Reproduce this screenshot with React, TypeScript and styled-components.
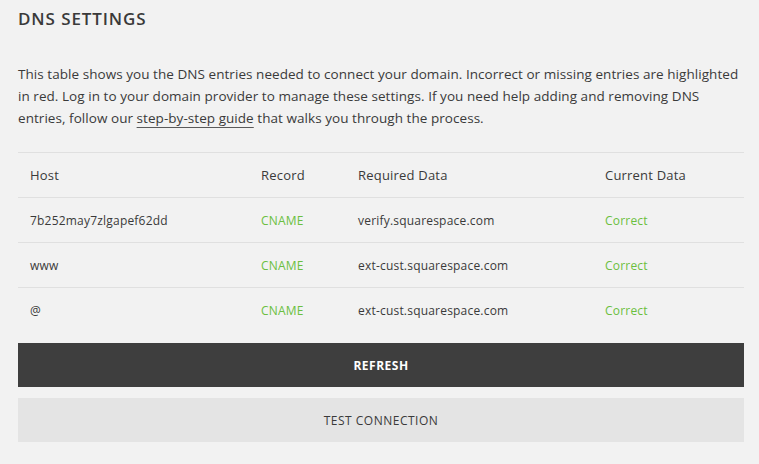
import React from 'react';
import styled, { createGlobalStyle } from 'styled-components';

type DnsEntry = {
  host: string;
  record: string;
  required: string;
  current: string;
};

const entries: DnsEntry[] = [
  { host: '7b252may7zlgapef62dd', record: 'CNAME', required: 'verify.squarespace.com', current: 'Correct' },
  { host: 'www', record: 'CNAME', required: 'ext-cust.squarespace.com', current: 'Correct' },
  { host: '@', record: 'CNAME', required: 'ext-cust.squarespace.com', current: 'Correct' },
];

const columnWidths = [231, 97, 247, 151];

const GlobalStyle = createGlobalStyle`
  html, body {
    margin: 0;
    padding: 0;
    background: #f2f2f2;
  }

  body {
    font-family: 'Open Sans', 'Liberation Sans', sans-serif;
    color: #3a3a3a;
    -webkit-font-smoothing: antialiased;
  }
`;

const StyledPanel = styled.div`
  padding: 9px 15px 0 18px;
  width: 759px;
  box-sizing: border-box;

  .title {
    margin: 0;
    font-size: 17px;
    font-weight: 600;
    letter-spacing: 0.9px;
    line-height: 20px;
  }

  .intro {
    margin: 34px 0 23px;
    font-size: 13.5px;
    line-height: 22px;
    letter-spacing: 0.05px;
  }

  .intro a {
    color: inherit;
    text-decoration: underline;
    text-decoration-color: #5a5a5a;
    text-underline-offset: 4px;
    text-decoration-thickness: 1px;
  }
`;

const StyledCol = styled.col<{ $width: number }>`
  width: ${(p) => p.$width}px;
`;

const StyledTable = styled.table`
  width: 726px;
  border-collapse: collapse;
  font-size: 12px;
  letter-spacing: 0.2px;

  th,
  td {
    text-align: left;
    padding: 0 0 0 12px;
    height: 44px;
  }

  th {
    font-weight: 500;
    font-size: 13px;
  }

  tr {
    border-top: 1px solid #e0e0e0;
  }

  .green {
    color: #6bbf3f;
  }
`;

const StyledButton = styled.button<{ $dark?: boolean }>`
  display: block;
  width: 726px;
  height: 44px;
  border: none;
  margin: 0;
  font-family: 'Open Sans', 'Liberation Sans', sans-serif;
  font-size: 12px;
  letter-spacing: 0.5px;
  background: ${(p) => (p.$dark ? '#3e3e3e' : '#e4e4e4')};
  color: ${(p) => (p.$dark ? '#ffffff' : '#3a3a3a')};
  font-weight: ${(p) => (p.$dark ? 700 : 400)};
  cursor: pointer;
`;

const StyledActions = styled.div`
  display: flex;
  flex-direction: column;
  gap: 11px;
  margin-top: 11px;
`;

export default function App() {
  return (
    <>
      <GlobalStyle />
      <StyledPanel>
        <h1 className="title">DNS SETTINGS</h1>
        <p className="intro">
          This table shows you the DNS entries needed to connect your domain. Incorrect or missing entries are highlighted
          in red. Log in to your domain provider to manage these settings. If you need help adding and removing DNS
          entries, follow our <a href="#">step-by-step guide</a> that walks you through the process.
        </p>
        <StyledTable>
          <colgroup>
            {columnWidths.map((width) => (
              <StyledCol key={width} $width={width} />
            ))}
          </colgroup>
          <thead>
            <tr>
              <th>Host</th>
              <th>Record</th>
              <th>Required Data</th>
              <th>Current Data</th>
            </tr>
          </thead>
          <tbody>
            {entries.map((entry) => (
              <tr key={entry.host}>
                <td>{entry.host}</td>
                <td className="green">{entry.record}</td>
                <td>{entry.required}</td>
                <td className="green">{entry.current}</td>
              </tr>
            ))}
          </tbody>
        </StyledTable>
        <StyledActions>
          <StyledButton $dark>REFRESH</StyledButton>
          <StyledButton>TEST CONNECTION</StyledButton>
        </StyledActions>
      </StyledPanel>
    </>
  );
}
